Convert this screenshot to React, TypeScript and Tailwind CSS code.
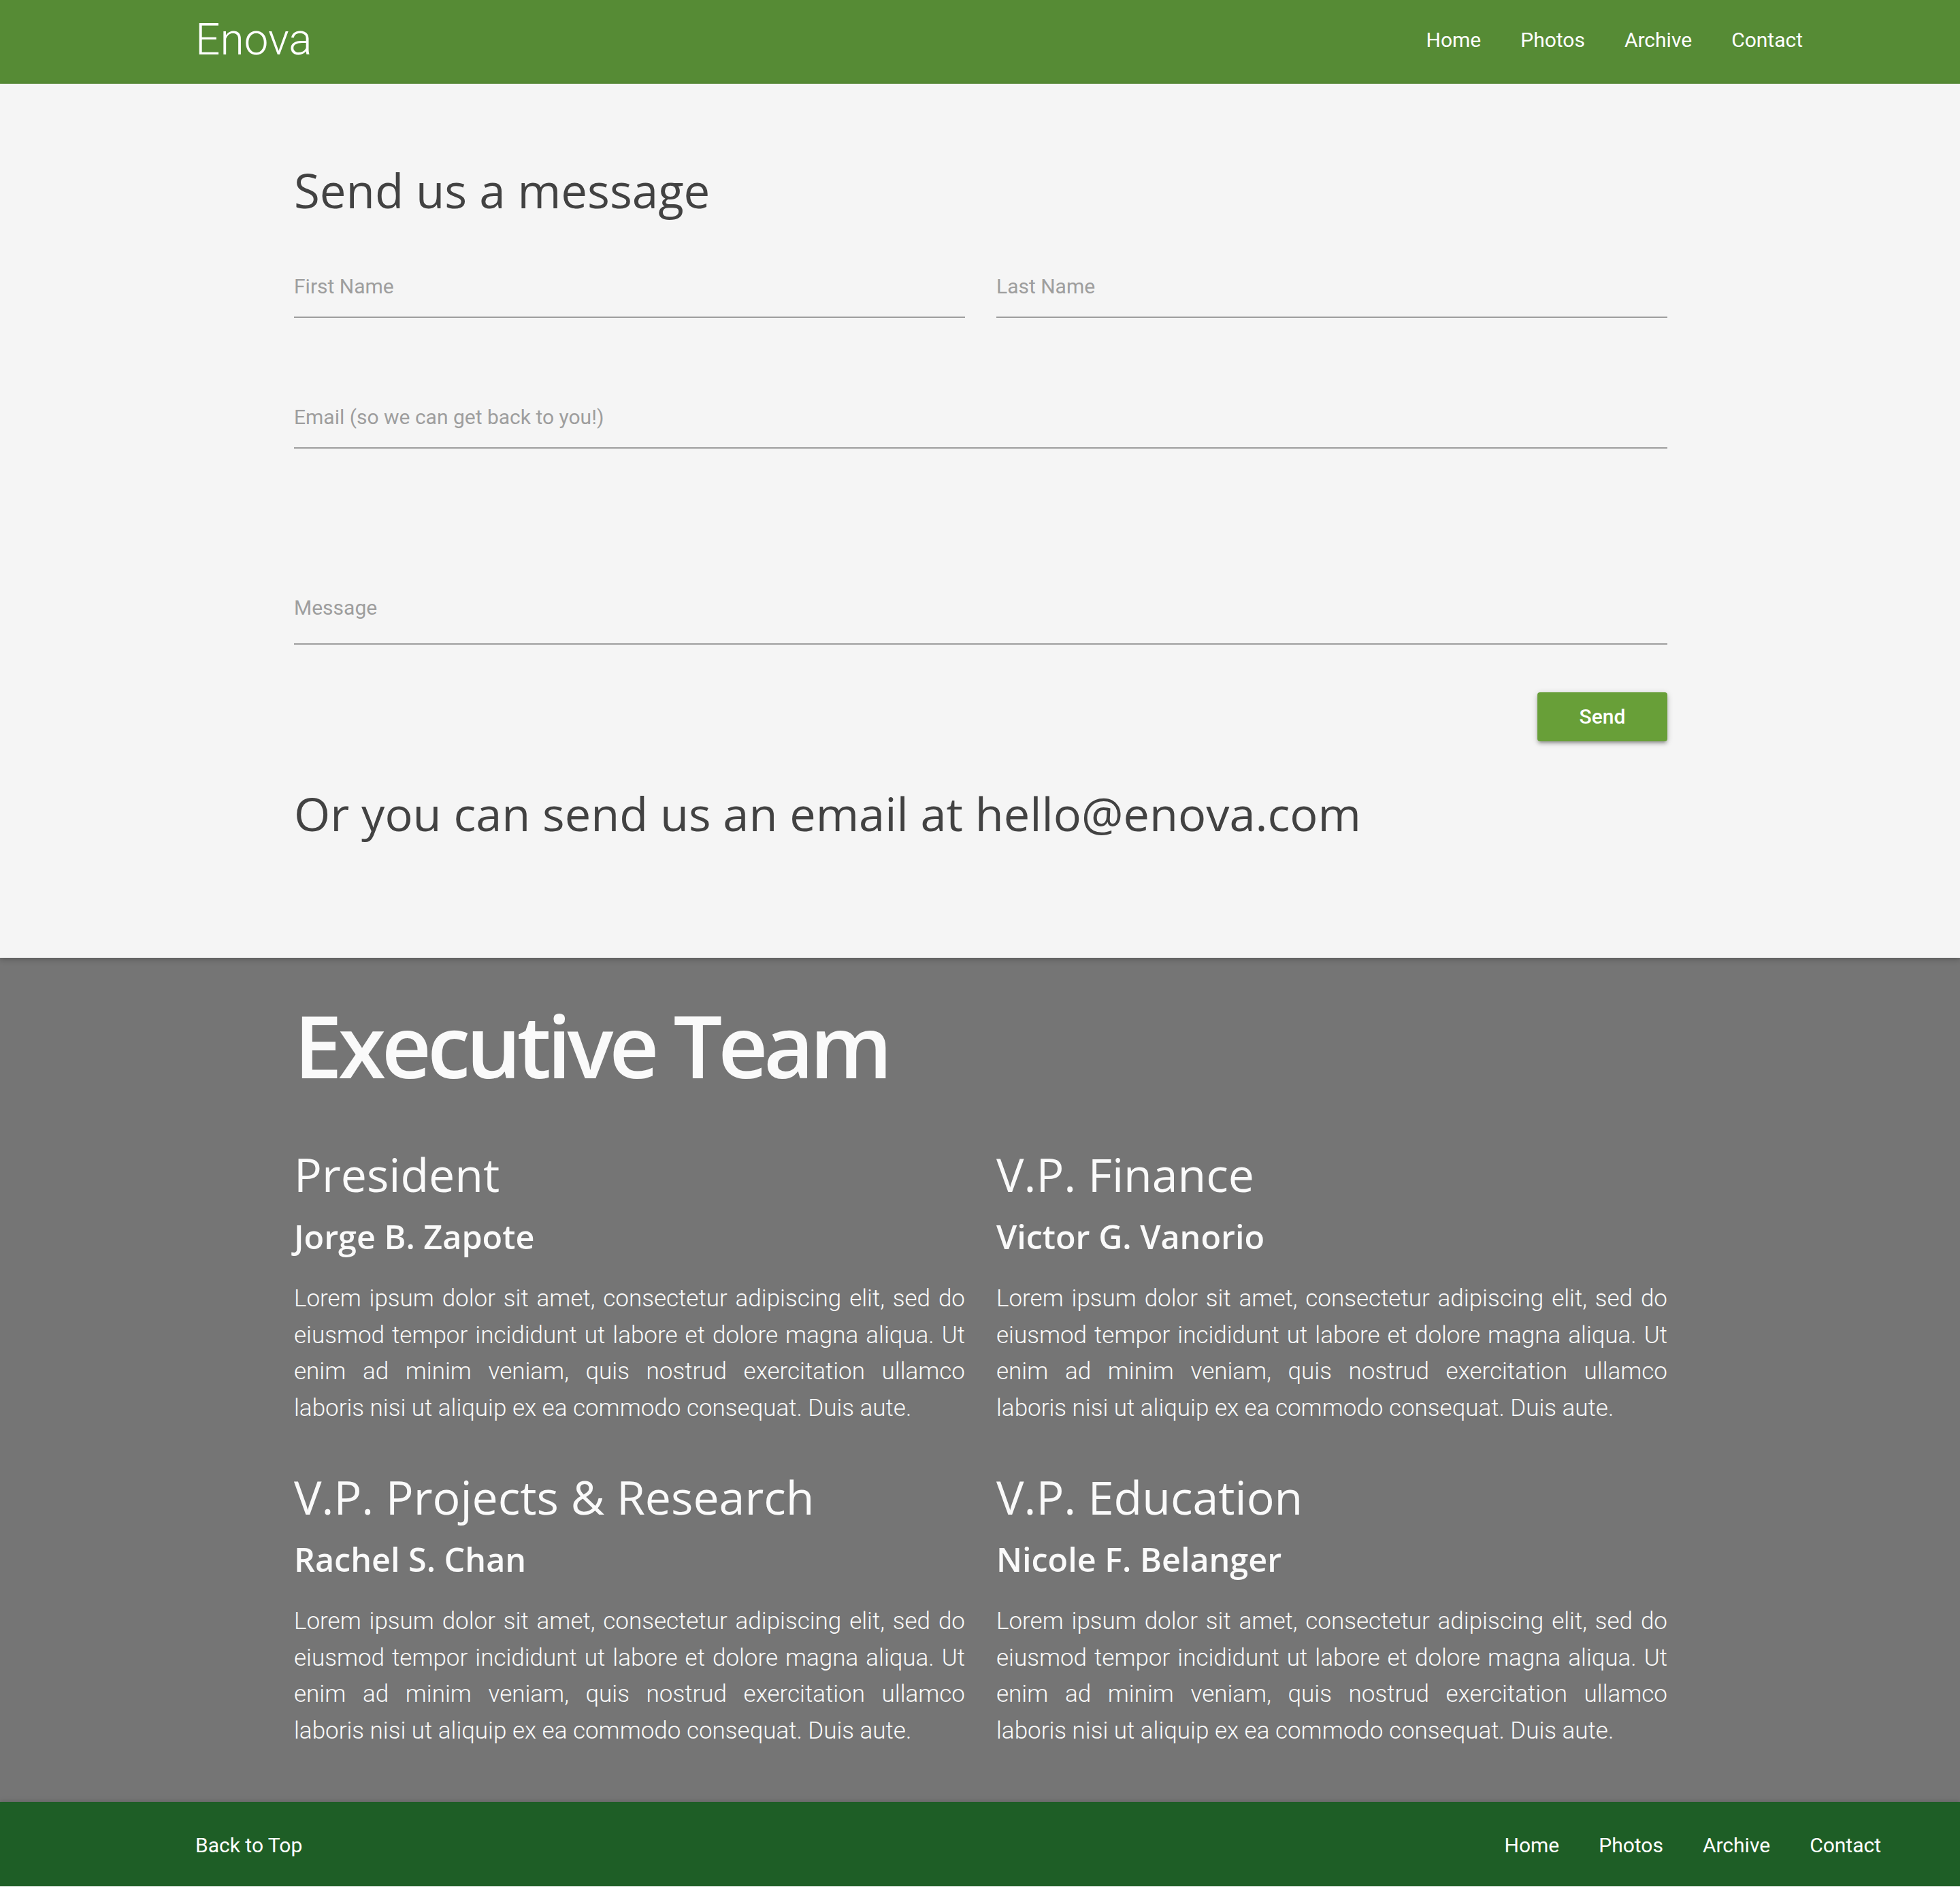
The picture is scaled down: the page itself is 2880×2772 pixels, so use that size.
const navLinks = ["Home", "Photos", "Archive", "Contact"];

const team = [
  { role: "President", name: "Jorge B. Zapote" },
  { role: "V.P. Finance", name: "Victor G. Vanorio" },
  { role: "V.P. Projects & Research", name: "Rachel S. Chan" },
  { role: "V.P. Education", name: "Nicole F. Belanger" },
];

// the bio wraps so that "laboris" opens the last line
const loremHead =
  "Lorem ipsum dolor sit amet, consectetur adipiscing elit, sed do eiusmod tempor incididunt ut labore et dolore magna aliqua. Ut enim ad minim veniam, quis nostrud exercitation ullamco";
const loremTail = "laboris nisi ut aliquip ex ea commodo consequat. Duis aute.";

function Field({ label, pb = "pb-[26px]" }: { label: string; pb?: string }) {
  return (
    <div className={`border-b-2 border-[#9e9e9e] ${pb}`}>
      <span className="block font-['Roboto',sans-serif] text-[30px] leading-[36px] text-[#9e9e9e]">
        {label}
      </span>
    </div>
  );
}

export default function App() {
  return (
    <div className="w-[2880px] bg-[#757575] font-['Roboto',sans-serif]">
      {/* Top nav */}
      <header className="flex h-[123px] justify-between bg-[#568b35] pl-[287px] pr-[202px] text-white">
        <a className="pt-[27px] text-[64px] font-light leading-[64px]">Enova</a>
        <ul className="flex pt-[44px]">
          {navLinks.map((l) => (
            <li key={l} className="px-[29px] text-[30px] leading-[30px]">
              {l}
            </li>
          ))}
        </ul>
      </header>

      {/* Contact form */}
      <main className="relative z-10 bg-[#f5f5f5] pb-[174px] pt-[118px] shadow-[0_3px_8px_rgba(0,0,0,0.22)]">
        <div className="ml-[432px] w-[2018px]">
          <h4 className="font-['Open_Sans',sans-serif] text-[69px] leading-[76px] text-[#424242]">
            Send us a message
          </h4>

          <div className="mt-[86px] grid grid-cols-2 gap-x-[46px]">
            <Field label="First Name" />
            <Field label="Last Name" />
          </div>

          <div className="mt-[128px]">
            <Field label="Email (so we can get back to you!)" />
          </div>

          <div className="mt-[216px]">
            <Field label="Message" pb="pb-[34px]" />
          </div>

          <div className="mt-[70px] flex justify-end">
            <button className="h-[72px] w-[191px] rounded-[4px] bg-[#689f38] text-[30px] font-medium leading-[72px] text-white shadow-[0_4px_4px_0_rgba(0,0,0,0.14),0_6px_2px_-4px_rgba(0,0,0,0.12),0_2px_10px_0_rgba(0,0,0,0.2)]">
              Send
            </button>
          </div>

          <h4 className="mt-[68px] font-['Open_Sans',sans-serif] text-[68.5px] leading-[76px] text-[#424242]">
            Or you can send us an email at hello@enova.com
          </h4>
        </div>
      </main>

      {/* Executive team */}
      <section className="bg-[#757575] pb-[78px] pt-[58px] text-[#fafafa]">
        <div className="ml-[432px] w-[2018px]">
          <h1 className="font-['Open_Sans',sans-serif] text-[127px] font-semibold leading-[140px] tracking-[-6px]">
            Executive Team
          </h1>
          <div className="mt-[82px] grid grid-cols-2 gap-x-[46px] gap-y-[66px]">
            {team.map((m) => (
              <div key={m.role}>
                <h4 className="font-['Open_Sans',sans-serif] text-[68px] leading-[76px]">{m.role}</h4>
                <h5 className="mt-[25px] font-['Open_Sans',sans-serif] text-[48.5px] font-semibold leading-[56px]">
                  {m.name}
                </h5>
                <div className="mt-[37px] font-['Roboto',sans-serif] text-[35px] font-light leading-[53.5px]">
                  <p className="text-justify [text-align-last:justify]">{loremHead}</p>
                  <p>{loremTail}</p>
                </div>
              </div>
            ))}
          </div>
        </div>
      </section>

      {/* Footer */}
      <footer className="relative flex h-[124px] justify-between bg-[#1e5e26] pl-[287px] pr-[87px] pt-[49px] text-[30px] leading-[30px] text-white shadow-[0_-2px_6px_rgba(0,0,0,0.12)]">
        <a>Back to Top</a>
        <ul className="flex">
          {navLinks.map((l) => (
            <li key={l} className="px-[29px]">
              {l}
            </li>
          ))}
        </ul>
      </footer>
    </div>
  );
}
